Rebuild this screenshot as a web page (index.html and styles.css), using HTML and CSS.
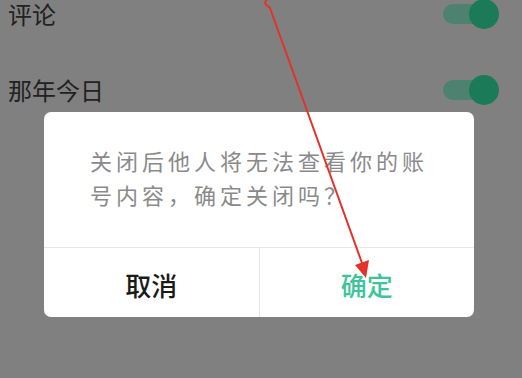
FILE: index.html
```html
<!DOCTYPE html>
<html lang="zh">
<head>
<meta charset="utf-8">
<link rel="stylesheet" href="styles.css">
</head>
<body>
<div class="screen">
  <div class="list">
    <div class="row">
      <span class="label">评论</span>
      <span class="switch"><span class="knob"></span></span>
    </div>
    <div class="row">
      <span class="label">那年今日</span>
      <span class="switch"><span class="knob"></span></span>
    </div>
  </div>

  <div class="dialog">
    <div class="message">关闭后他人将无法查看你的账<br>号内容，确定关闭吗？</div>
    <div class="actions">
      <div class="btn cancel">取消</div>
      <div class="btn ok">确定</div>
    </div>
  </div>

  <svg class="arrow" width="522" height="378" viewBox="0 0 522 378">
    <path d="M267 0 C263 3 266 5 270 8 L362 263" fill="none" stroke="#e4322a" stroke-width="2"/>
    <polygon points="366,278 355,265 369,260" fill="#e4322a"/>
  </svg>
</div>
</body>
</html>
```
FILE: styles.css
```css
html, body {
  margin: 0;
  padding: 0;
  width: 522px;
  height: 378px;
  overflow: hidden;
  background: #808080;
  font-family: "Noto Sans CJK SC", "Noto Sans", sans-serif;
}

.screen {
  position: relative;
  width: 522px;
  height: 378px;
  overflow: hidden;
}

.list {
  display: flex;
  flex-direction: column;
  margin-top: -25px;
}

.row {
  height: 76px;
  display: flex;
  align-items: center;
  justify-content: space-between;
  padding: 0 32px 0 8px;
}

.label {
  font-size: 24px;
  color: #222;
  line-height: 24px;
  padding-top: 1px;
}

.switch {
  position: relative;
  width: 47px;
  height: 20px;
  border-radius: 10px;
  background: #4e8270;
  margin-top: 1px;
}

.knob {
  position: absolute;
  right: -9px;
  top: -5px;
  width: 30px;
  height: 30px;
  border-radius: 50%;
  background: #1b7a58;
}

.dialog {
  position: absolute;
  left: 44px;
  top: 112px;
  width: 430px;
  height: 205px;
  background: #fff;
  border-radius: 7px;
  display: flex;
  flex-direction: column;
}

.message {
  padding: 31px 20px 0 46px;
  height: 135px;
  flex: none;
  box-sizing: border-box;
  font-size: 22px;
  line-height: 34px;
  letter-spacing: 4px;
  color: #8a8a8a;
}

.actions {
  display: flex;
  flex: 1;
  border-top: 1px solid #e6e6e6;
}

.btn {
  flex: 1;
  display: flex;
  align-items: center;
  justify-content: center;
  font-size: 26px;
  font-weight: 500;
  padding-top: 4px;
}

.cancel {
  color: #1a1a1a;
  border-right: 1px solid #e6e6e6;
}

.ok {
  color: #3cc49a;
}

.arrow {
  position: absolute;
  left: 0;
  top: 0;
}
```
